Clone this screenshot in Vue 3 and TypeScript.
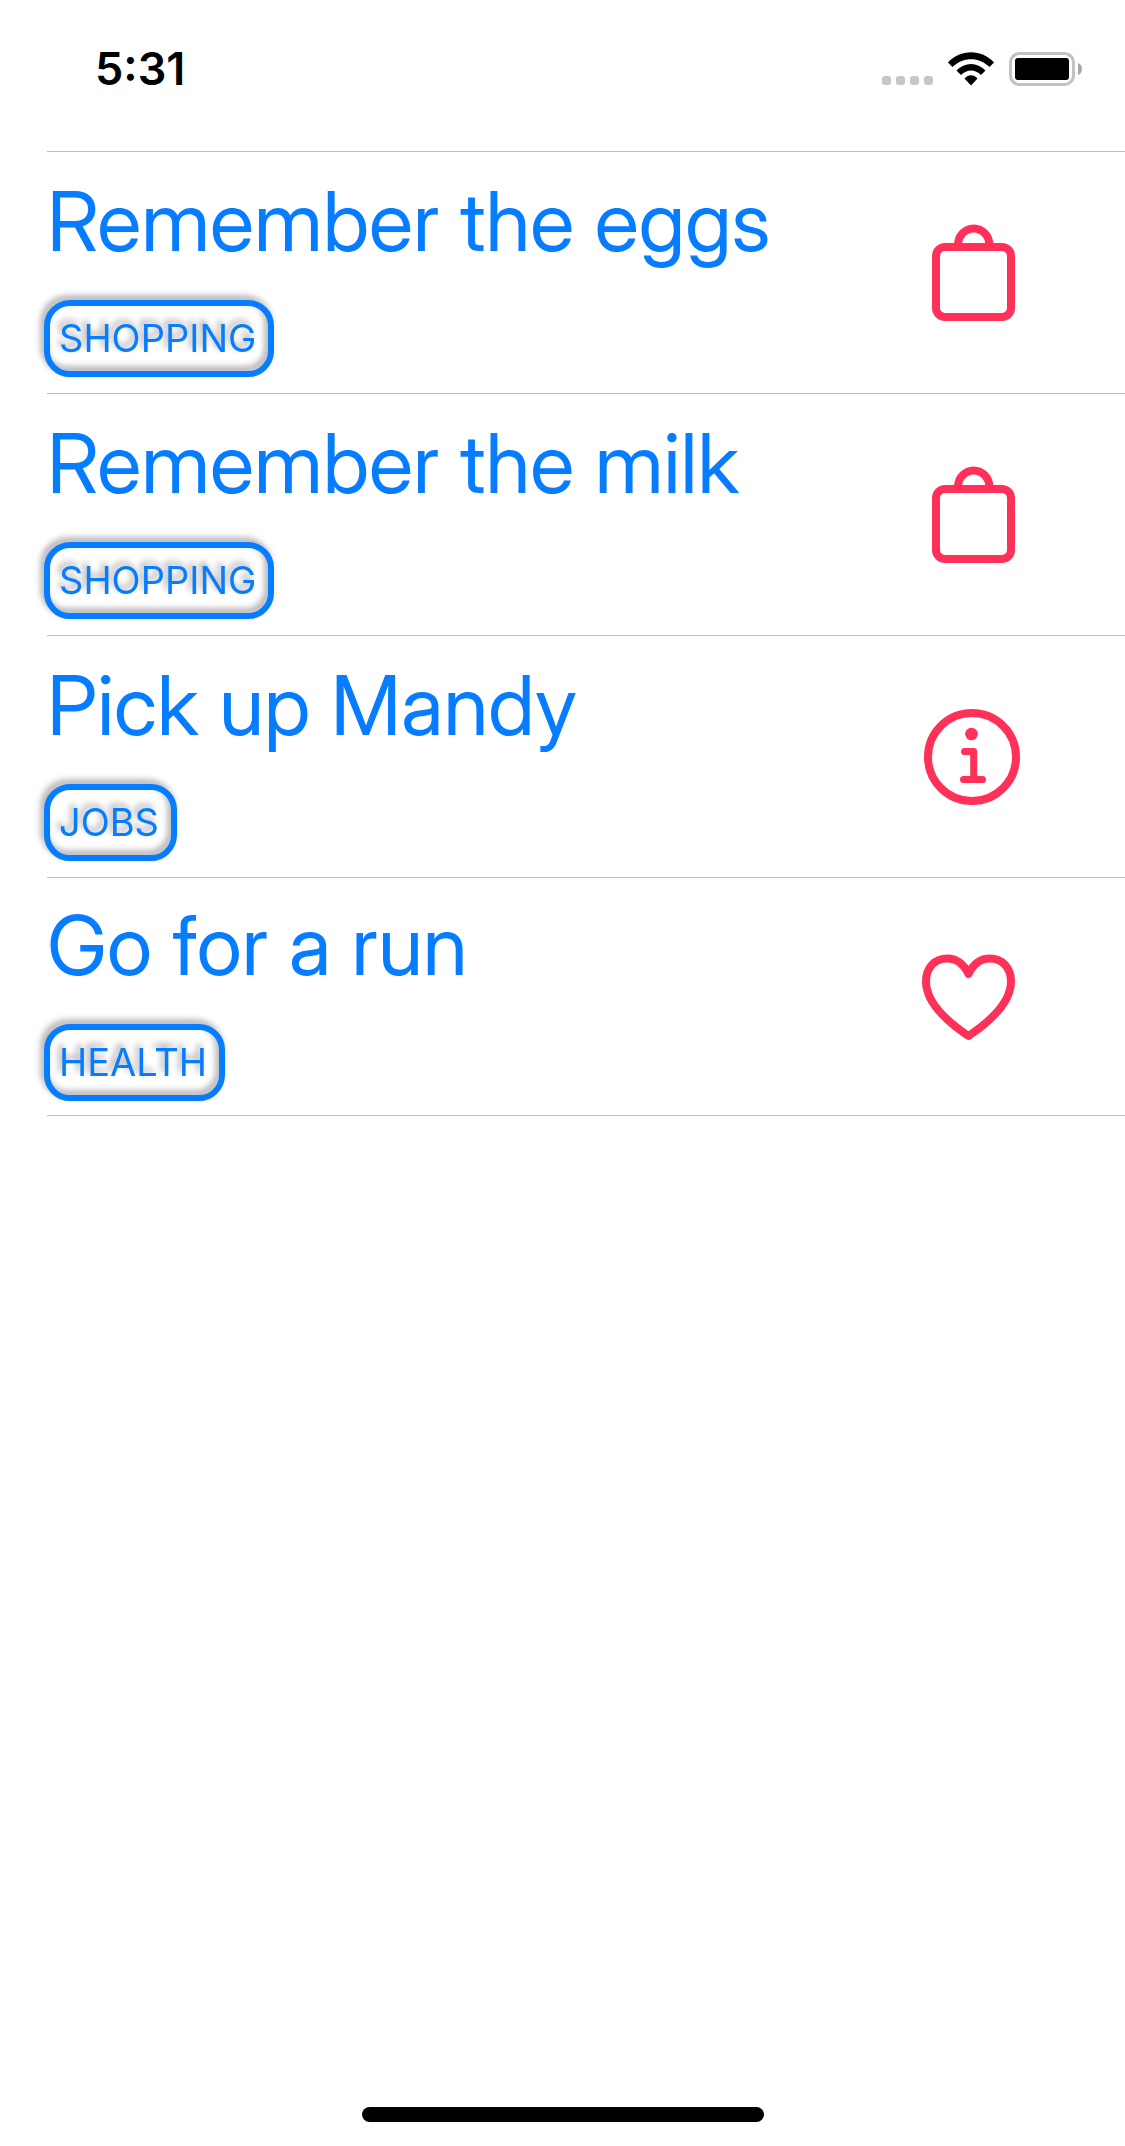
<script setup lang="ts">
type IconName = 'bag' | 'info' | 'heart'

interface Reminder {
  id: number
  title: string
  tag: string
  icon: IconName
}

const reminders: Reminder[] = [
  { id: 1, title: 'Remember the eggs', tag: 'SHOPPING', icon: 'bag' },
  { id: 2, title: 'Remember the milk', tag: 'SHOPPING', icon: 'bag' },
  { id: 3, title: 'Pick up Mandy', tag: 'JOBS', icon: 'info' },
  { id: 4, title: 'Go for a run', tag: 'HEALTH', icon: 'heart' },
]
</script>

<template>
  <div class="screen">
    <header class="status">
      <time class="clock">5:31</time>
      <div class="indicators">
        <svg class="signal" width="51" height="10" viewBox="0 0 51 10" aria-label="No signal">
          <rect v-for="n in 4" :key="n" :x="(n - 1) * 14" width="9" height="9" rx="3" />
        </svg>
        <svg class="wifi" width="46" height="34" viewBox="0 0 46 34" aria-label="Wi-Fi">
          <path d="M0 10.500C12.500 -3.200 33.500 -3.200 46 10.500L41.500 15C31 4.500 15 4.500 4.500 15Z" />
          <path d="M8.500 18.500C16.500 9.700 29.500 9.700 37.500 18.500L33 23C27 17 19 17 13 23Z" />
          <path d="M16.500 26.500C20 22 26 22 29.500 26.500L23 33.500Z" />
        </svg>
        <svg class="battery" width="74" height="34" viewBox="0 0 74 34" aria-label="Battery full">
          <rect class="shell" x="1.500" y="1.500" width="63" height="31" rx="9" />
          <rect x="6" y="6" width="54" height="22" rx="3" />
          <path class="nub" d="M69 11Q73 12.500 73 17T69 23Z" />
        </svg>
      </div>
    </header>

    <main>
      <ul class="list">
        <li v-for="item in reminders" :key="item.id" class="item">
          <button type="button" class="row">
            <span class="body">
              <span class="title">{{ item.title }}</span>
              <span class="tag">{{ item.tag }}</span>
            </span>
            <svg class="icon" width="100" height="100" viewBox="0 0 100 100" aria-hidden="true">
              <template v-if="item.icon === 'bag'">
                <rect x="14" y="22" width="75" height="70" rx="9" />
                <path d="M36 22V20a15.700 16.500 0 0 1 31.400 0v2" />
              </template>
              <template v-else-if="item.icon === 'info'">
                <circle cx="50" cy="48" r="44" />
                <circle class="solid" cx="49.500" cy="25" r="6.300" />
                <path class="fine" d="M42.500 42.500H51.700V70.500M41.500 70.500H60.500" />
              </template>
              <path
                v-else
                d="M46.500 87C22 70.500 4 52 4 32.500C4 18.500 13 9.500 25 9.500C34.500 9.500 42 15.500 46.500 25C51 15.500 58.500 9.500 68 9.500C80 9.500 89 18.500 89 32.500C89 52 71 70.500 46.500 87Z"
              />
            </svg>
          </button>
        </li>
      </ul>
    </main>

    <div class="home-indicator"></div>
  </div>
</template>

<style>
body {
  background: #fff;
}
</style>

<style scoped>
.screen {
  box-sizing: border-box;
  display: flex;
  flex-direction: column;
  min-height: 100vh;
  padding-bottom: 24px;
  background: #fff;
  font-family: Inter, "Liberation Sans", sans-serif;
}

.status {
  display: flex;
  justify-content: space-between;
  align-items: center;
  padding: 49px 42px 62px 95px;
}

.clock {
  font-size: 45px;
  font-weight: 600;
  line-height: 40px;
}

.indicators {
  display: flex;
  align-items: flex-end;
}

.signal {
  fill: #c7c5ca;
}

.wifi {
  margin: 0 15px;
}

.shell {
  fill: none;
  stroke: #c4c0c4;
  stroke-width: 3;
}

.nub {
  fill: #a9a6ab;
}

main {
  flex: 1;
}

.list {
  list-style: none;
  margin: 0;
  padding: 0 0 0 47px;
}

.item {
  border-bottom: 1px solid #bfbfc1;
}

.item:first-child {
  border-top: 1px solid #bfbfc1;
}

.row {
  display: flex;
  align-items: center;
  justify-content: space-between;
  width: 100%;
  margin: 0;
  padding: 20px 103px 16px 0;
  border: 0;
  background: none;
  color: #067cff;
  font: inherit;
  text-align: left;
}

.item:last-child .row {
  padding-top: 18px;
  padding-bottom: 14px;
}

.body {
  display: flex;
  flex-direction: column;
  align-items: flex-start;
  gap: 28px;
}

.title {
  font-family: "Inter Display", Inter, "Liberation Sans", sans-serif;
  font-size: 82px;
  line-height: 100px;
}

.tag {
  margin-left: -3px;
  padding: 8px 12px 8px 9px;
  border: 6px solid #067cff;
  border-radius: 26px;
  font-size: 38px;
  line-height: 49px;
  filter: drop-shadow(-3px -4px 3px rgba(60, 50, 60, 0.45));
}

.icon {
  flex: none;
  overflow: visible;
  fill: none;
  stroke: #ff3158;
  stroke-width: 8;
  stroke-linecap: round;
  stroke-linejoin: round;
}

.icon .solid {
  fill: #ff3158;
  stroke: none;
}

.icon .fine {
  stroke-width: 7;
}

.home-indicator {
  align-self: center;
  width: 402px;
  max-width: 60%;
  height: 15px;
  border-radius: 8px;
  background: #000;
}
</style>
